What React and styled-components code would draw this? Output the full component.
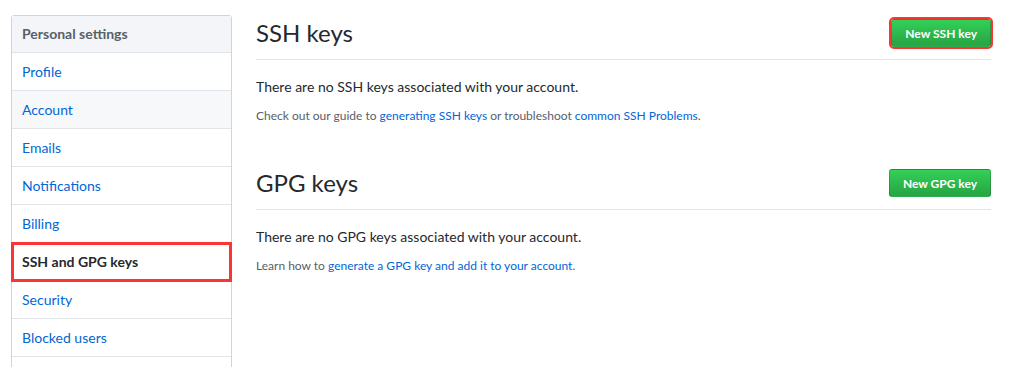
import React from 'react'
import styled, { createGlobalStyle } from 'styled-components'

const GlobalStyle = createGlobalStyle`
  body {
    margin: 0;
    background: #fff;
    font-family: Lato, "Liberation Sans", Arial, sans-serif;
    font-size: 14px;
    color: #24292e;
  }
`

const Page = styled.div`
  display: flex;
  align-items: flex-start;
  padding: 15px 33px 0 11px;
`

const Menu = styled.nav`
  width: 219px;
  flex-shrink: 0;
  padding-bottom: 30px;
  border: 1px solid #d1d5da;
  border-radius: 3px 3px 0 0;
`

const MenuHeader = styled.div`
  padding: 8px 10px;
  line-height: 20px;
  font-weight: 700;
  color: #586069;
  background: #f3f5f8;
  border-bottom: 1px solid #e1e4e8;
`

const MenuItem = styled.a`
  display: block;
  padding: 8px 10px;
  line-height: 21px;
  border-bottom: 1px solid #e1e4e8;
  color: ${p => (p.selected ? '#24292e' : '#0366d6')};
  font-weight: ${p => (p.selected ? 700 : 400)};
  background: ${p => (p.hover ? '#f6f8fa' : '#fff')};
  text-decoration: none;
  ${p => p.marked && 'outline: 3px solid #fb3434; outline-offset: -2px;'}
`

const Main = styled.main`
  flex: 1;
  margin-left: 24px;
`

const Section = styled.section`
  margin-bottom: 40px;
`

const Subhead = styled.div`
  display: flex;
  align-items: center;
  justify-content: space-between;
  padding-bottom: 8px;
  margin-bottom: 16px;
  border-bottom: 1px solid #e1e4e8;
`

const Heading = styled.h2`
  margin: 0;
  font-size: 24px;
  font-weight: 400;
  line-height: 36px;
`

const Button = styled.button`
  height: 28px;
  padding: 0 13px;
  font-family: inherit;
  font-size: 12px;
  font-weight: 700;
  color: #fff;
  background: linear-gradient(-180deg, #34d058 0%, #28a745 90%);
  border: 1px solid rgba(27, 31, 35, 0.2);
  border-radius: 3px;
  ${p => p.marked && 'outline: 2px solid #fb3434; outline-offset: 0;'}
`

const Blank = styled.p`
  margin: 0 0 10px;
  line-height: 21px;
`

const Note = styled.p`
  margin: 0;
  font-size: 12px;
  line-height: 18px;
  color: #586069;
`

const Link = styled.a`
  color: #0366d6;
  text-decoration: none;
`

const items = [
  'Profile',
  'Account',
  'Emails',
  'Notifications',
  'Billing',
  'SSH and GPG keys',
  'Security',
  'Blocked users',
]

const App = () => (
  <>
    <GlobalStyle />
    <Page>
      <Menu>
        <MenuHeader>Personal settings</MenuHeader>
        {items.map(item => (
          <MenuItem
            key={item}
            href="#"
            hover={item === 'Account'}
            selected={item === 'SSH and GPG keys'}
            marked={item === 'SSH and GPG keys'}
          >
            {item}
          </MenuItem>
        ))}
      </Menu>
      <Main>
        <Section>
          <Subhead>
            <Heading>SSH keys</Heading>
            <Button marked>New SSH key</Button>
          </Subhead>
          <Blank>There are no SSH keys associated with your account.</Blank>
          <Note>
            Check out our guide to <Link href="#">generating SSH keys</Link> or troubleshoot{' '}
            <Link href="#">common SSH Problems</Link>.
          </Note>
        </Section>
        <Section>
          <Subhead>
            <Heading>GPG keys</Heading>
            <Button>New GPG key</Button>
          </Subhead>
          <Blank>There are no GPG keys associated with your account.</Blank>
          <Note>
            Learn how to <Link href="#">generate a GPG key and add it to your account</Link>.
          </Note>
        </Section>
      </Main>
    </Page>
  </>
)

export default App
